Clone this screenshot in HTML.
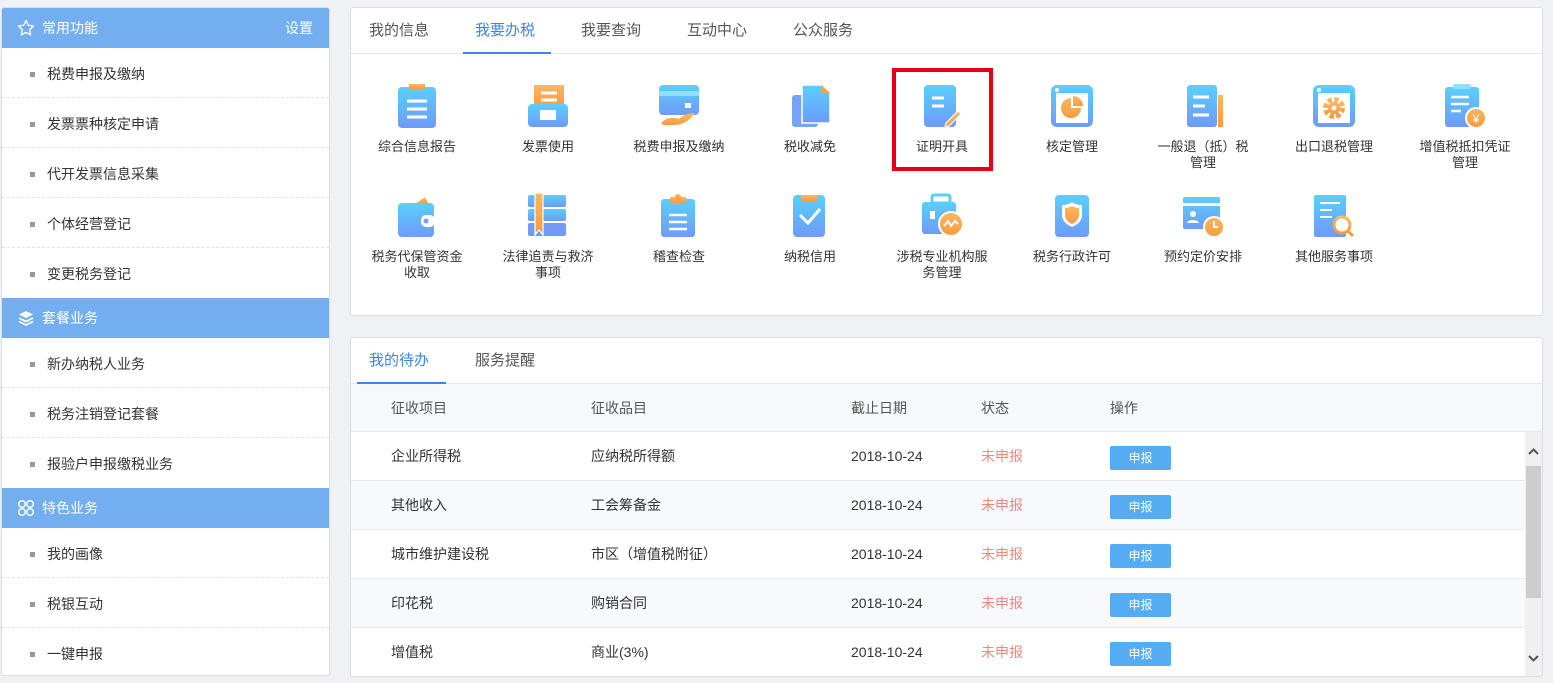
<!DOCTYPE html>
<html><head><meta charset="utf-8">
<style>
*{margin:0;padding:0;box-sizing:border-box}
body{width:1553px;height:683px;background:#f0f1f5;font-family:"Liberation Sans","Noto Sans CJK SC",sans-serif;position:relative;overflow:hidden;color:#333}
.left{position:absolute;left:1px;top:7px;width:329px;height:669px;background:#fff;border:1px solid #dcdde2;border-radius:3px;overflow:hidden}
.hd{height:40px;background:#73aff0;color:#fff;font-size:14px;line-height:40px;padding-left:40px;position:relative}
.hd svg{position:absolute;left:15px;top:11px}
.hd .set{position:absolute;right:16px;top:0}
.it{height:50px;line-height:52px;font-size:14px;padding-left:45px;position:relative;border-bottom:1px dashed #e2e2e2;color:#333}
.it.last{border-bottom:none}
.it:before{content:"";position:absolute;left:28px;top:24px;width:5px;height:5px;background:#999}
.panel{position:absolute;left:350px;width:1193px;background:#fff;border:1px solid #dcdde2;border-radius:3px;overflow:hidden}
.tabs{height:46px;border-bottom:1px solid #e6e8ee;position:relative;font-size:15px}
.tab{position:absolute;top:0;line-height:46px;color:#555}
.tab.on{color:#3a86e8}
.ul{position:absolute;bottom:-1px;height:2px;background:#3a86e8}
.ic{position:absolute;width:130px;text-align:center;font-size:13px;line-height:16px;color:#333}
.ic svg{display:block;margin:0 auto 10px}
.red{position:absolute;left:892px;top:68px;width:101px;height:103px;border:4px solid #e60012}
.th{position:absolute;left:0;top:46px;width:1193px;height:48px;background:#f7f8fc;border-bottom:1px solid #e6e8ee}
.row{position:absolute;left:0;width:1174px;height:49px;border-bottom:1px solid #e9eaef}
.c{position:absolute;font-size:14px;line-height:49px;color:#333}
.btn{position:absolute;left:759px;top:14px;width:61px;height:24px;background:#55acf3;border-radius:2px;color:#fff;font-size:12px;text-align:center;line-height:24px}
.c.st{color:#f3877f}
.sb{position:absolute;left:1174px;top:94px;width:17px;height:245px;background:#f0f0f0}
.thumb{position:absolute;left:1px;top:34px;width:15px;height:132px;background:#cdcdcd}
</style></head><body>
<svg width="0" height="0" style="position:absolute"><defs>
<linearGradient id="g" x1="0" y1="0" x2="0" y2="1"><stop offset="0" stop-color="#58d0fd"/><stop offset="1" stop-color="#6f9af9"/></linearGradient>
<linearGradient id="o" x1="0" y1="0" x2="0" y2="1"><stop offset="0" stop-color="#fdb763"/><stop offset="1" stop-color="#f99b3f"/></linearGradient>
</defs></svg>

<div class="left">
<div class="hd"><svg width="18" height="18" viewBox="0 0 18 18"><path d="M9 1.5l2.3 4.8 5.2.7-3.8 3.6.9 5.2L9 13.3 4.4 15.8l.9-5.2L1.5 7l5.2-.7z" fill="none" stroke="#fff" stroke-width="1.3" stroke-linejoin="round"/></svg>常用功能<span class="set">设置</span></div>
<div class="it">税费申报及缴纳</div><div class="it">发票票种核定申请</div><div class="it">代开发票信息采集</div><div class="it">个体经营登记</div><div class="it last">变更税务登记</div>
<div class="hd"><svg width="18" height="18" viewBox="0 0 18 18"><path d="M9 2l7 3.5-7 3.5-7-3.5z" fill="#fff"/><path d="M2 9l7 3.5L16 9M2 12.5l7 3.5 7-3.5" fill="none" stroke="#fff" stroke-width="1.8"/></svg>套餐业务</div>
<div class="it">新办纳税人业务</div><div class="it">税务注销登记套餐</div><div class="it last">报验户申报缴税业务</div>
<div class="hd"><svg width="18" height="18" viewBox="0 0 18 18" fill="none" stroke="#fff" stroke-width="1.4"><circle cx="5" cy="5" r="3.3"/><circle cx="13" cy="5" r="3.3"/><circle cx="5" cy="13" r="3.3"/><circle cx="13" cy="13" r="3.3"/></svg>特色业务</div>
<div class="it">我的画像</div><div class="it">税银互动</div><div class="it last">一键申报</div>
</div>

<div class="panel" style="top:7px;height:309px">
<div class="tabs">
<span class="tab" style="left:18px">我的信息</span><span class="tab on" style="left:124px">我要办税</span><span class="tab" style="left:230px">我要查询</span><span class="tab" style="left:336px">互动中心</span><span class="tab" style="left:442px">公众服务</span>
<div class="ul" style="left:112px;width:88px"></div>
</div>
</div>

<div class="ic" style="left:352px;top:83px"><svg width="44" height="46" viewBox="0 0 44 46"><rect x="3" y="4" width="38" height="41" rx="4" fill="url(#g)"/><rect x="14" y="1" width="16" height="5" fill="url(#o)"/><path d="M12 18h20M12 26h20M12 34h20" stroke="#fff" stroke-width="3"/></svg>综合信息报告</div>
<div class="ic" style="left:483px;top:83px"><svg width="44" height="46" viewBox="0 0 44 46"><rect x="8" y="2" width="30" height="22" fill="url(#o)"/><path d="M15 10h16M15 17h16" stroke="#fff" stroke-width="3"/><rect x="2" y="21" width="40" height="23" rx="4" fill="url(#g)"/><rect x="14" y="27" width="16" height="10" fill="#fff"/></svg>发票使用</div>
<div class="ic" style="left:614px;top:83px"><svg width="44" height="46" viewBox="0 0 44 46"><rect x="2" y="2" width="40" height="30" rx="4" fill="url(#g)"/><rect x="2" y="8" width="40" height="5" fill="#8fe0ff"/><rect x="28" y="20" width="6" height="5" fill="#fff"/><path d="M4 40c6-6 12-6 18-4 4-4 10-6 16-6-6 8-12 12-22 12H6z" fill="url(#o)"/></svg>税费申报及缴纳</div>
<div class="ic" style="left:745px;top:83px"><svg width="44" height="46" viewBox="0 0 44 46"><rect x="4" y="12" width="26" height="32" rx="3" fill="#78a2f8"/><path d="M14 2h20l8 8v30H14z" fill="url(#g)" stroke="#fff" stroke-width="1.5"/><path d="M34 2v8h8z" fill="url(#o)"/></svg>税收减免</div>
<div class="ic" style="left:877px;top:83px"><svg width="44" height="46" viewBox="0 0 44 46"><rect x="4" y="2" width="32" height="42" rx="4" fill="url(#g)"/><path d="M12 15h12M12 23h12" stroke="#fff" stroke-width="3"/><path d="M26 40l12-12 3 3-12 12-4 1z" fill="url(#o)" stroke="#fff" stroke-width="1.2"/></svg>证明开具</div>
<div class="ic" style="left:1007px;top:83px"><svg width="44" height="46" viewBox="0 0 44 46"><rect x="1" y="2" width="42" height="42" rx="6" fill="url(#g)"/><rect x="6" y="10" width="32" height="30" fill="#fff"/><circle cx="7" cy="7" r="2" fill="#fff"/><path d="M21 15a10 10 0 1 0 10 10H21z" fill="url(#o)"/><path d="M23 13a10 10 0 0 1 10 10H23z" fill="url(#o)"/></svg>核定管理</div>
<div class="ic" style="left:1138px;top:83px"><svg width="44" height="46" viewBox="0 0 44 46"><rect x="6" y="2" width="30" height="42" rx="3" fill="url(#g)"/><rect x="37" y="12" width="5" height="32" fill="url(#o)"/><path d="M12 14h16M12 23h12M12 32h16" stroke="#fff" stroke-width="3"/></svg>一般退（抵）税<br>管理</div>
<div class="ic" style="left:1269px;top:83px"><svg width="44" height="46" viewBox="0 0 44 46"><rect x="1" y="2" width="42" height="42" rx="6" fill="url(#g)"/><rect x="6" y="10" width="32" height="30" fill="#fff"/><circle cx="7" cy="7" r="2" fill="#fff"/><circle cx="22" cy="25" r="8" fill="none" stroke="url(#o)" stroke-width="6" stroke-dasharray="4 2.3"/><circle cx="22" cy="25" r="6" fill="url(#o)"/><circle cx="22" cy="25" r="2.5" fill="#fff"/></svg>出口退税管理</div>
<div class="ic" style="left:1400px;top:83px"><svg width="44" height="46" viewBox="0 0 44 46"><rect x="2" y="4" width="34" height="40" rx="3" fill="url(#g)"/><rect x="10" y="1" width="18" height="5" rx="2" fill="#8fe0ff"/><path d="M8 14h18M8 21h18M8 28h10" stroke="#fff" stroke-width="2.5"/><circle cx="33" cy="35" r="10" fill="url(#o)" stroke="#fff" stroke-width="2"/><text x="33" y="40" font-size="12" fill="#fff" text-anchor="middle" font-family="Liberation Sans">¥</text></svg>增值税抵扣凭证<br>管理</div>

<div class="ic" style="left:352px;top:193px"><svg width="44" height="46" viewBox="0 0 44 46"><path d="M22 10l8-6 3 6z" fill="url(#o)"/><rect x="3" y="10" width="36" height="34" rx="4" fill="url(#g)"/><rect x="26" y="22" width="14" height="12" rx="5" fill="#fff"/><circle cx="31" cy="28" r="2.5" fill="#78a2f8"/></svg>税务代保管资金<br>收取</div>
<div class="ic" style="left:483px;top:193px"><svg width="44" height="46" viewBox="0 0 44 46"><rect x="2" y="2" width="38" height="12" rx="2" fill="url(#g)"/><rect x="2" y="16" width="38" height="12" rx="2" fill="url(#g)"/><rect x="2" y="30" width="38" height="13" rx="2" fill="#6f9af9"/><path d="M9 0h8v42l-4-5-4 5z" fill="url(#o)" stroke="#fff" stroke-width="1.2"/></svg>法律追责与救济<br>事项</div>
<div class="ic" style="left:614px;top:193px"><svg width="44" height="46" viewBox="0 0 44 46"><rect x="4" y="6" width="34" height="38" rx="3" fill="url(#g)"/><path d="M13 4h16v6H13z" fill="url(#o)"/><circle cx="21" cy="4" r="3" fill="url(#o)"/><path d="M12 22h18M12 29h18M12 36h18" stroke="#fff" stroke-width="2.5"/></svg>稽查检查</div>
<div class="ic" style="left:745px;top:193px"><svg width="44" height="46" viewBox="0 0 44 46"><rect x="5" y="2" width="32" height="42" rx="4" fill="url(#g)"/><rect x="13" y="2" width="16" height="6" fill="url(#o)"/><path d="M12 22l8 8 12-14" fill="none" stroke="#fff" stroke-width="3"/></svg>纳税信用</div>
<div class="ic" style="left:877px;top:193px"><svg width="44" height="46" viewBox="0 0 44 46"><rect x="12" y="2" width="18" height="8" rx="2" fill="none" stroke="#58d0fd" stroke-width="3"/><rect x="2" y="9" width="34" height="32" rx="3" fill="url(#g)"/><rect x="10" y="18" width="5" height="8" fill="#fff"/><circle cx="31" cy="31" r="12" fill="url(#o)" stroke="#fff" stroke-width="2"/><path d="M24 33l4-5 3 5 4-5 3 3" fill="none" stroke="#fff" stroke-width="2"/></svg>涉税专业机构服<br>务管理</div>
<div class="ic" style="left:1007px;top:193px"><svg width="44" height="46" viewBox="0 0 44 46"><rect x="5" y="2" width="34" height="42" rx="4" fill="url(#g)"/><path d="M12 12c4 0 7-1 10-3 3 2 6 3 10 3v10c0 6-5 10-10 12-5-2-10-6-10-12z" fill="#fff"/><path d="M15 15c3 0 5-1 7-2 2 1 4 2 7 2v7c0 4-3 7-7 9-4-2-7-5-7-9z" fill="url(#o)"/></svg>税务行政许可</div>
<div class="ic" style="left:1138px;top:193px"><svg width="44" height="46" viewBox="0 0 44 46"><rect x="2" y="4" width="37" height="32" rx="2" fill="url(#g)"/><rect x="2" y="10" width="37" height="3" fill="#fff"/><circle cx="12" cy="21" r="3" fill="#fff"/><path d="M6 30c1-4 11-4 12 0z" fill="#fff"/><circle cx="33" cy="34" r="10" fill="url(#o)" stroke="#fff" stroke-width="2"/><path d="M33 28v6h4" fill="none" stroke="#fff" stroke-width="2"/></svg>预约定价安排</div>
<div class="ic" style="left:1269px;top:193px"><svg width="44" height="46" viewBox="0 0 44 46"><rect x="2" y="2" width="32" height="42" rx="2" fill="url(#g)"/><path d="M8 10h20M8 17h12M8 24h12" stroke="#fff" stroke-width="2"/><circle cx="30" cy="32" r="8" fill="#fff" stroke="url(#o)" stroke-width="3"/><path d="M36 38l5 5" stroke="#f99b3f" stroke-width="3"/></svg>其他服务事项</div>

<div class="red"></div>

<div class="panel" style="top:337px;height:340px">
<div class="tabs">
<span class="tab on" style="left:18px">我的待办</span><span class="tab" style="left:124px">服务提醒</span>
<div class="ul" style="left:6px;width:89px"></div>
</div>
<div class="th"><span class="c" style="left:40px;line-height:48px;color:#555">征收项目</span><span class="c" style="left:240px;line-height:48px;color:#555">征收品目</span><span class="c" style="left:500px;line-height:48px;color:#555">截止日期</span><span class="c" style="left:630px;line-height:48px;color:#555">状态</span><span class="c" style="left:759px;line-height:48px;color:#555">操作</span></div>
<div class="row" style="top:94px;background:#fff"><span class="c" style="left:40px">企业所得税</span><span class="c" style="left:240px">应纳税所得额</span><span class="c" style="left:500px">2018-10-24</span><span class="c st" style="left:630px">未申报</span><span class="btn">申报</span></div>
<div class="row" style="top:143px;background:#f8f9fd"><span class="c" style="left:40px">其他收入</span><span class="c" style="left:240px">工会筹备金</span><span class="c" style="left:500px">2018-10-24</span><span class="c st" style="left:630px">未申报</span><span class="btn">申报</span></div>
<div class="row" style="top:192px;background:#fff"><span class="c" style="left:40px">城市维护建设税</span><span class="c" style="left:240px">市区（增值税附征）</span><span class="c" style="left:500px">2018-10-24</span><span class="c st" style="left:630px">未申报</span><span class="btn">申报</span></div>
<div class="row" style="top:241px;background:#f8f9fd"><span class="c" style="left:40px">印花税</span><span class="c" style="left:240px">购销合同</span><span class="c" style="left:500px">2018-10-24</span><span class="c st" style="left:630px">未申报</span><span class="btn">申报</span></div>
<div class="row" style="top:290px;background:#fff;border-bottom:none"><span class="c" style="left:40px">增值税</span><span class="c" style="left:240px">商业(3%)</span><span class="c" style="left:500px">2018-10-24</span><span class="c st" style="left:630px">未申报</span><span class="btn">申报</span></div>
<div class="sb"><div class="thumb"></div>
<svg style="position:absolute;left:3px;top:16px" width="11" height="8" viewBox="0 0 11 8"><path d="M1 6l4.5-4.5L10 6" fill="none" stroke="#555" stroke-width="2"/></svg>
<svg style="position:absolute;left:3px;top:222px" width="11" height="8" viewBox="0 0 11 8"><path d="M1 2l4.5 4.5L10 2" fill="none" stroke="#555" stroke-width="2"/></svg>
</div>
</div>
</body></html>
